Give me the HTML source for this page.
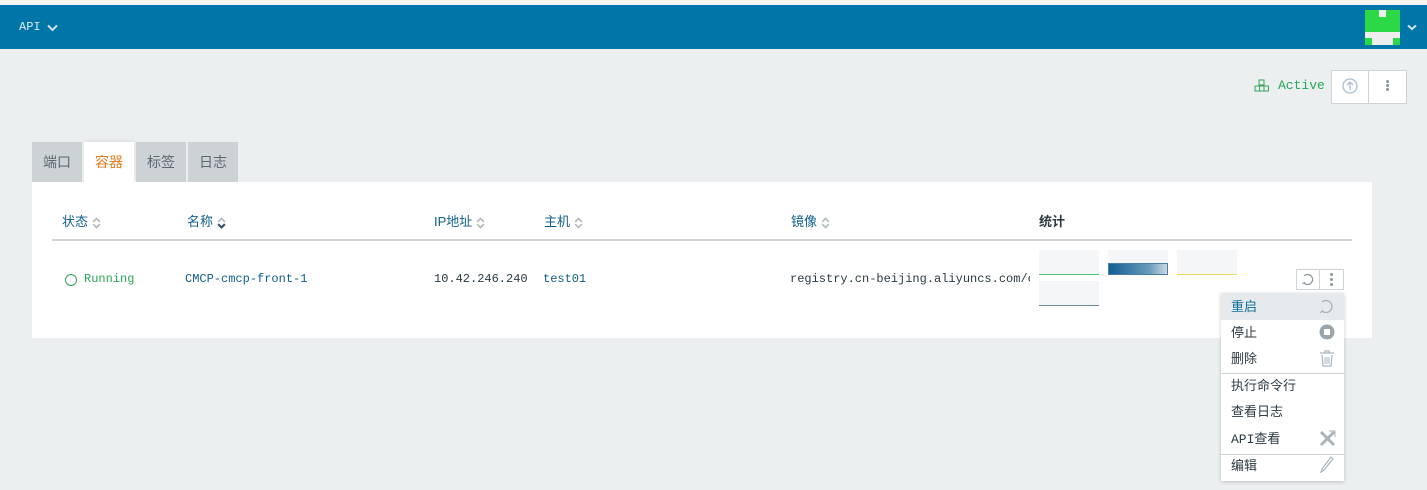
<!DOCTYPE html>
<html><head><meta charset="utf-8"><style>
*{box-sizing:border-box;margin:0;padding:0}
body{width:1427px;height:490px;background:#ebeff0;font-family:"Liberation Sans","Noto Sans CJK SC",sans-serif;font-size:13px;position:relative;overflow:hidden}
.abs{position:absolute}
.mono{font-family:"Liberation Mono","Noto Sans CJK SC",monospace;font-size:12px}
.top{left:0;top:0;width:1427px;height:5px;background:#f4f4f4}
.hdr{left:0;top:5px;width:1427px;height:44px;background:#0075a8}
.tab{top:142px;height:40px;width:50px;background:#cdd2d5;color:#5d6870;font-size:14px;text-align:center;line-height:40px}
.th{top:211px;color:#0f5f8a;font-size:13px}
.sort{display:inline-block;width:9px;height:16px;vertical-align:middle;margin-left:4px}
.menu{left:1221px;top:293px;width:123px;height:188px;background:#fff;box-shadow:0 1px 4px rgba(0,0,0,.2)}
.mi{position:absolute;left:0;width:123px;height:27px;line-height:27px;padding-left:10px;color:#2c3a42;font-size:13px}
.bar{width:60px;height:25px;background:#f4f6f7}
</style></head><body>
<div class="abs top"></div>
<div class="abs hdr"></div>
<div class="abs mono" style="left:19px;top:20px;color:#dfe9ef;font-size:12px">API</div>
<svg class="abs" style="left:47px;top:24px" width="11" height="8"><path d="M1 1.5L5.5 6L10 1.5" stroke="#cfe0ea" stroke-width="2" fill="none"/></svg>
<div class="abs" style="left:1365px;top:10px;width:35px;height:35px;background:#eeeeee"></div>
<div class="abs" style="left:1365px;top:10px;width:14px;height:22px;background:#2bd845"></div>
<div class="abs" style="left:1386px;top:10px;width:14px;height:22px;background:#2bd845"></div>
<div class="abs" style="left:1365px;top:17px;width:35px;height:15px;background:#2bd845"></div>
<div class="abs" style="left:1365px;top:38px;width:7px;height:7px;background:#2bd845"></div>
<div class="abs" style="left:1393px;top:38px;width:7px;height:7px;background:#2bd845"></div>
<svg class="abs" style="left:1407px;top:24px" width="10" height="7"><path d="M1 1.5L5 5L9 1.5" stroke="#cfe0ea" stroke-width="2" fill="none"/></svg>

<svg class="abs" style="left:1254px;top:79px" width="16" height="14"><g fill="none" stroke="#3aa35a" stroke-width="1"><rect x="5" y="1" width="5" height="5"/><rect x="1" y="7" width="4.5" height="5"/><rect x="5.5" y="7" width="4.5" height="5"/><rect x="10" y="7" width="4.5" height="5"/></g></svg>
<div class="abs mono" style="left:1278px;top:78px;color:#27a75a;font-size:13px">Active</div>
<div class="abs" style="left:1331px;top:70px;width:76px;height:34px;background:#fff;border:1px solid #cfd4d8"></div>
<div class="abs" style="left:1368px;top:71px;width:1px;height:32px;background:#cfd4d8"></div>
<svg class="abs" style="left:1342px;top:78px" width="16" height="16"><circle cx="8" cy="8" r="7" fill="none" stroke="#a9bfd3" stroke-width="1.3"/><path d="M8 12V4M5 7l3-3 3 3" fill="none" stroke="#a9bfd3" stroke-width="1.3"/></svg>
<div class="abs" style="left:1386px;top:80px;width:3px;height:3px;border-radius:2px;background:#8a96a0;box-shadow:0 4px 0 #8a96a0,0 8px 0 #8a96a0"></div>

<div class="abs tab" style="left:32px">端口</div>
<div class="abs tab" style="left:84px;background:#fff;color:#e07b1c;box-shadow:0 -2px 4px rgba(0,0,0,.06)">容器</div>
<div class="abs tab" style="left:136px">标签</div>
<div class="abs tab" style="left:188px">日志</div>

<div class="abs" style="left:32px;top:182px;width:1340px;height:156px;background:#fff"></div>
<div class="abs th" style="left:62px">状态<svg class="sort" viewBox="0 0 8 14"><path d="M1 6l3-3 3 3M1 8l3 3 3-3" stroke="#b5bcc2" stroke-width="1.5" fill="none"/></svg></div>
<div class="abs th" style="left:187px">名称<svg class="sort" viewBox="0 0 8 14"><path d="M1 6l3-3 3 3" stroke="#b5bcc2" stroke-width="1.5" fill="none"/><path d="M1 8l3 3 3-3" stroke="#2d4f6e" stroke-width="1.8" fill="none"/></svg></div>
<div class="abs th" style="left:434px">IP地址<svg class="sort" viewBox="0 0 8 14"><path d="M1 6l3-3 3 3M1 8l3 3 3-3" stroke="#b5bcc2" stroke-width="1.5" fill="none"/></svg></div>
<div class="abs th" style="left:544px">主机<svg class="sort" viewBox="0 0 8 14"><path d="M1 6l3-3 3 3M1 8l3 3 3-3" stroke="#b5bcc2" stroke-width="1.5" fill="none"/></svg></div>
<div class="abs th" style="left:791px">镜像<svg class="sort" viewBox="0 0 8 14"><path d="M1 6l3-3 3 3M1 8l3 3 3-3" stroke="#b5bcc2" stroke-width="1.5" fill="none"/></svg></div>
<div class="abs th" style="left:1039px;color:#2c3a42;font-weight:bold">统计</div>
<div class="abs" style="left:52px;top:239px;width:1300px;height:2px;background:#cfd4d8"></div>

<div class="abs" style="left:65px;top:274px;width:12px;height:12px;border-radius:50%;border:1px solid #3aa35a"></div>
<div class="abs mono" style="left:84px;top:272px;color:#27a75a">Running</div>
<div class="abs mono" style="left:185px;top:272px;color:#0f5f8a">CMCP-cmcp-front-1</div>
<div class="abs mono" style="left:434px;top:272px;color:#2c3a42">10.42.246.240</div>
<div class="abs mono" style="left:543px;top:272px;color:#0f5f8a">test01</div>
<div class="abs mono" style="left:790px;top:272px;color:#2c3a42;width:240px;overflow:hidden;white-space:nowrap">registry.cn-beijing.aliyuncs.com/cmcp</div>

<div class="abs bar" style="left:1039px;top:250px;border-bottom:1px solid #4cc476"></div>
<div class="abs bar" style="left:1108px;top:250px"></div>
<div class="abs" style="left:1108px;top:263px;width:60px;height:12px;background:linear-gradient(90deg,#0f5f92,#6d9bbd 70%,#c9d9e5);border:1px solid #4b7ea6"></div>
<div class="abs bar" style="left:1177px;top:250px;border-bottom:1px solid #eedc5a"></div>
<div class="abs bar" style="left:1039px;top:281px;border-bottom:1px solid #6b8a95"></div>

<div class="abs" style="left:1296px;top:269px;width:48px;height:21px;border:1px solid #cfd4d8;background:#fff"></div>
<div class="abs" style="left:1319px;top:270px;width:1px;height:19px;background:#cfd4d8"></div>
<svg class="abs" style="left:1301px;top:272px" width="14" height="14"><path d="M3 11A5 5 0 1 0 3 4" fill="none" stroke="#8a96a0" stroke-width="1.2"/><path d="M1 12l3-2" stroke="#8a96a0"/></svg>
<div class="abs" style="left:1330px;top:273px;width:3px;height:3px;border-radius:2px;background:#8a96a0;box-shadow:0 5px 0 #8a96a0,0 10px 0 #8a96a0"></div>

<div class="abs menu">
<div class="mi" style="top:0;background:#e6eaec;color:#0f6ea0">重启</div>
<div class="mi" style="top:26px">停止</div>
<div class="mi" style="top:52px">删除</div>
<div style="position:absolute;left:0;top:80px;width:123px;height:1px;background:#cfd4d8"></div>
<div class="mi" style="top:79px">执行命令行</div>
<div class="mi" style="top:105px">查看日志</div>
<div class="mi" style="top:132px"><span class="mono" style="font-size:13px">API</span>查看</div>
<div style="position:absolute;left:0;top:161px;width:123px;height:1px;background:#cfd4d8"></div>
<div class="mi" style="top:159px">编辑</div>
<svg style="position:absolute;left:98px;top:5px" width="16" height="16"><path d="M3 13A6 6 0 1 0 3 4" fill="none" stroke="#a9b4bd" stroke-width="1.3"/><path d="M1 15l3-3" stroke="#a9b4bd"/></svg>
<svg style="position:absolute;left:98px;top:31px" width="16" height="16"><circle cx="8" cy="8" r="7.5" fill="#9aa4ab"/><rect x="5" y="5" width="6" height="6" fill="#fff"/></svg>
<svg style="position:absolute;left:98px;top:57px" width="16" height="17"><path d="M1 3h14M6 3V1h4v2M3 5l1 11h8l1-11" fill="none" stroke="#a9b4bd" stroke-width="1.2"/><path d="M6 7v7M8 7v7M10 7v7" stroke="#a9b4bd"/></svg>
<svg style="position:absolute;left:98px;top:137px" width="17" height="17"><path d="M2 2l13 13M15 2L2 15" stroke="#a9b4bd" stroke-width="3"/><path d="M10 1h6v6" fill="none" stroke="#a9b4bd"/></svg>
<svg style="position:absolute;left:99px;top:163px" width="14" height="17"><path d="M11 1l2 2-9 11-3 2 1-3z" fill="none" stroke="#a9b4bd" stroke-width="1.2"/></svg>
</div>
</body></html>
